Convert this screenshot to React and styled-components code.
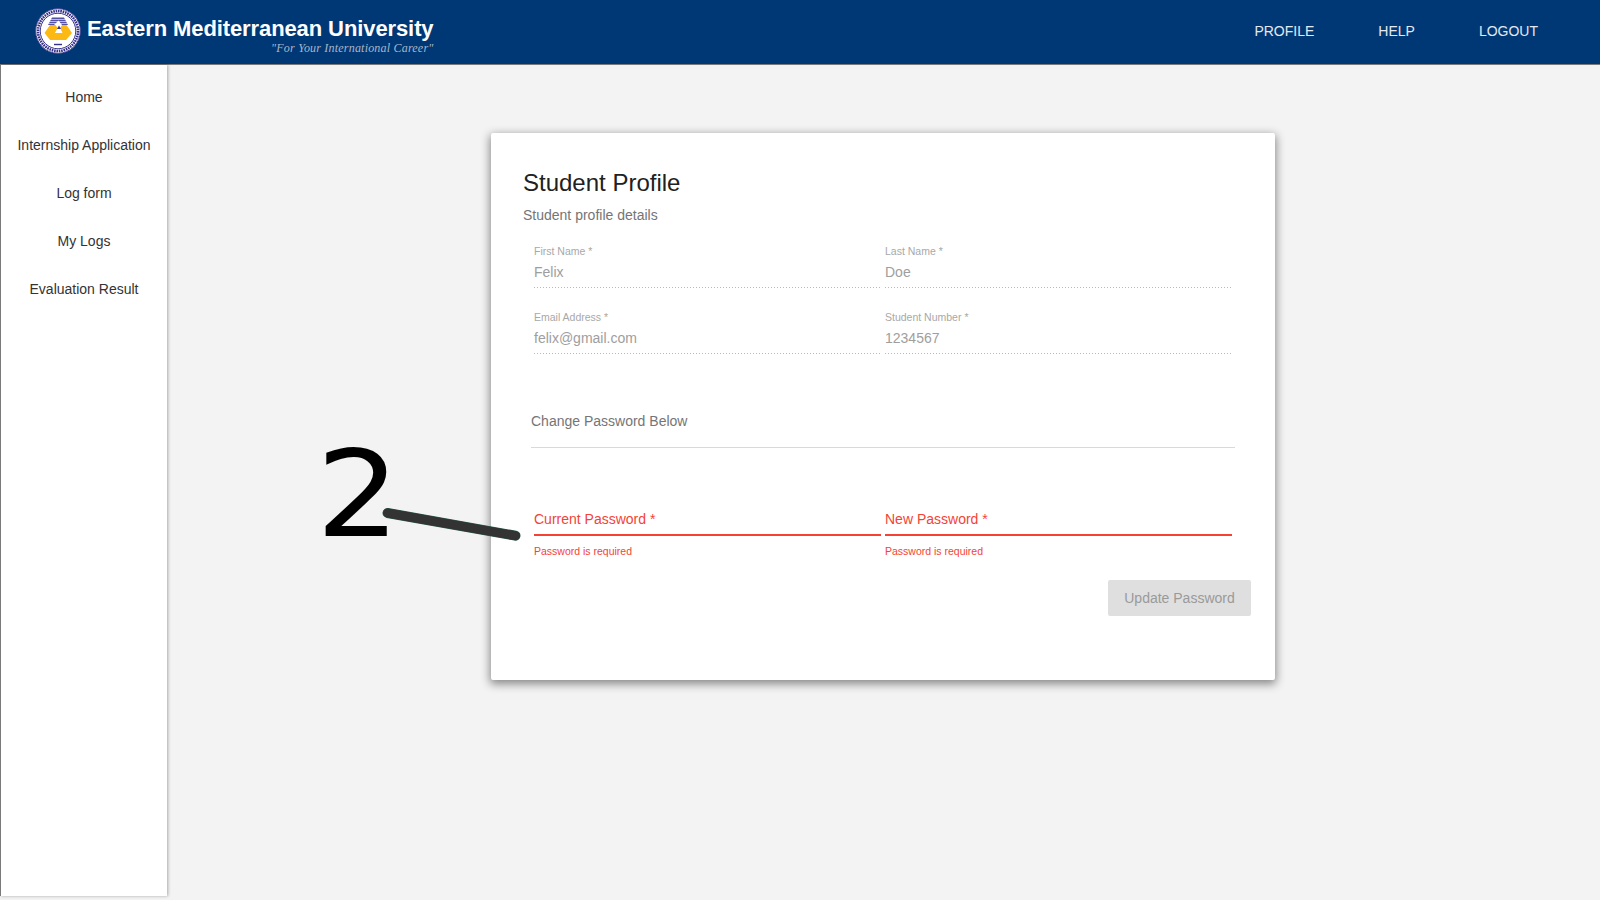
import React from 'react'
import styled, { createGlobalStyle } from 'styled-components'

const GlobalStyle = createGlobalStyle`
  html, body {
    margin: 0;
    padding: 0;
    height: 100%;
    background: #f3f3f3;
    font-family: "Liberation Sans", Arial, sans-serif;
    overflow: hidden;
  }
  * { box-sizing: border-box; }
`

const Page = styled.div`
  width: 1600px;
  height: 900px;
  position: relative;
  display: flex;
  flex-direction: column;
`

const Header = styled.header`
  height: 65px;
  flex: none;
  background: #003876;
  border-bottom: 1px solid #7a7a7a;
  display: flex;
  align-items: flex-start;
  justify-content: space-between;
  padding: 8px 62px 0 35px;
`

const Brand = styled.div`
  display: flex;
  gap: 6px;
`

const BrandText = styled.div`
  display: flex;
  flex-direction: column;
  align-items: flex-end;
  color: #fff;
`

const BrandName = styled.div`
  font-size: 22px;
  font-weight: 700;
  line-height: 26px;
  margin-top: 8px;
  white-space: nowrap;
  letter-spacing: -0.1px;
`

const Tagline = styled.div`
  font-family: "Liberation Serif", serif;
  font-style: italic;
  font-size: 12px;
  line-height: 14px;
  margin-top: -1px;
  color: #a9b6c8;
  letter-spacing: 0.2px;
  white-space: nowrap;
`

const TopNav = styled.nav`
  display: flex;
  gap: 64px;
  padding-top: 15px;
`

const TopLink = styled.a`
  color: #e4e9f0;
  font-size: 14px;
  line-height: 17px;
`

const Body = styled.div`
  display: flex;
  height: 831px;
  flex: none;
`

const Sidebar = styled.aside`
  width: 167px;
  flex: none;
  background: #fff;
  border-left: 1px solid #7a7a7a;
  box-shadow: 1px 0 3px rgba(0, 0, 0, 0.3);
  padding-top: 8px;
  display: flex;
  flex-direction: column;
`

const SideLink = styled.a`
  height: 48px;
  display: flex;
  align-items: center;
  justify-content: center;
  font-size: 14px;
  color: #333;
  white-space: nowrap;
`

const Main = styled.main`
  flex: 1;
  display: flex;
  justify-content: center;
  align-items: flex-start;
  padding: 68px 1px 0 0;
`

const Card = styled.section`
  width: 784px;
  height: 547px;
  background: #fff;
  border-radius: 2px;
  box-shadow: 0 3px 10px 1px rgba(0, 0, 0, 0.45);
  padding: 33px 24px 0 32px;
  display: flex;
  flex-direction: column;
`

const Title = styled.h1`
  margin: 0;
  font-size: 24px;
  font-weight: 400;
  line-height: 34px;
  color: #212121;
`

const Subtitle = styled.p`
  margin: 6px 0 0;
  font-size: 14px;
  line-height: 18px;
  color: #757575;
`

const FieldGrid = styled.div`
  display: grid;
  grid-template-columns: 347px 347px;
  column-gap: 4px;
  padding: ${p => p.$top}px 0 0 11px;
  row-gap: 22px;
`

const Field = styled.div`
  display: flex;
  flex-direction: column;
`

const SmallLabel = styled.label`
  font-size: 10.5px;
  line-height: 14px;
  color: #a8a8a8;
`

const Value = styled.div`
  font-size: 14px;
  line-height: 18px;
  height: 30px;
  padding-top: 5px;
  color: #9e9e9e;
  background-image: linear-gradient(to right, #b8b8b8 1px, transparent 1px);
  background-size: 3px 1px;
  background-repeat: repeat-x;
  background-position: left bottom;
`

const Section = styled.div`
  margin: 48px 16px 0 8px;
  height: 46px;
  padding-top: 10px;
  font-size: 14px;
  line-height: 18px;
  color: #757575;
  border-bottom: 1px solid #d9d9d9;
`

const ErrorInput = styled.div`
  height: 34px;
  padding-top: 8px;
  font-size: 14px;
  line-height: 18px;
  color: #f44336;
  border-bottom: 2px solid #f44336;
`

const Helper = styled.div`
  margin-top: 8px;
  font-size: 10.5px;
  line-height: 14px;
  color: #f44336;
`

const Actions = styled.div`
  display: flex;
  justify-content: flex-end;
  margin-top: 22px;
`

const Disabled = styled.button`
  width: 143px;
  height: 36px;
  border: 0;
  border-radius: 2px;
  background: #dfdfdf;
  color: #9a9a9a;
  font-family: inherit;
  font-size: 14px;
  padding: 0;
`

const Marker = styled.div`
  position: absolute;
  left: 316px;
  top: 426px;
  font-family: "DejaVu Sans", sans-serif;
  font-size: 120px;
  line-height: 137px;
  color: #000;
  transform: scaleX(1.1);
  transform-origin: left top;
`

const Stroke = styled.svg`
  position: absolute;
  left: 376px;
  top: 500px;
  width: 150px;
  height: 50px;
`

const Seal = () => (
  <svg width="46" height="46" viewBox="0 0 46 46" aria-hidden="true">
    <circle cx="23" cy="23" r="22.5" fill="#fff" />
    <circle cx="23" cy="23" r="22.3" fill="none" stroke="#35308a" strokeWidth="0.9" />
    <circle cx="23" cy="23" r="20" fill="none" stroke="#35308a" strokeWidth="2.6" strokeDasharray="1.6 0.8" />
    <circle cx="23" cy="23" r="17.8" fill="none" stroke="#35308a" strokeWidth="1" />
    <path d="M17 9.5 H29 L33 17 L27 17 L23.5 12.5 L19 17 H13 Z" fill="#5552a3" />
    <path d="M15.5 11.5 H30.5 M14.5 13.5 H31.5 M13.5 15.5 H32.5" stroke="#fff" strokeWidth="0.6" />
    <path d="M15 17 H20.5 L23 20.5 L20 25 H27 L25 20.5 L27 17 H31.5 L37 25 L31 32 H15 L9.5 25 Z" fill="#fdb913" />
    <path d="M24 17.5 L27.5 25 H20 Z" fill="#fff" />
    <path d="M24 17.5 L22 21 H26 Z" fill="#35308a" />
    <path d="M19 36.5 H27" stroke="#35308a" strokeWidth="1.4" />
  </svg>
)

const sideItems = ['Home', 'Internship Application', 'Log form', 'My Logs', 'Evaluation Result']

const App = () => {
  return (
    <Page>
      <GlobalStyle />
      <Header>
        <Brand>
          <Seal />
          <BrandText>
            <BrandName>Eastern Mediterranean University</BrandName>
            <Tagline>"For Your International Career"</Tagline>
          </BrandText>
        </Brand>
        <TopNav>
          <TopLink>PROFILE</TopLink>
          <TopLink>HELP</TopLink>
          <TopLink>LOGOUT</TopLink>
        </TopNav>
      </Header>
      <Body>
        <Sidebar>
          {sideItems.map(item => <SideLink key={item}>{item}</SideLink>)}
        </Sidebar>
        <Main>
          <Card>
            <Title>Student Profile</Title>
            <Subtitle>Student profile details</Subtitle>
            <FieldGrid $top={20}>
              <Field><SmallLabel>First Name *</SmallLabel><Value>Felix</Value></Field>
              <Field><SmallLabel>Last Name *</SmallLabel><Value>Doe</Value></Field>
              <Field><SmallLabel>Email Address *</SmallLabel><Value>felix@gmail.com</Value></Field>
              <Field><SmallLabel>Student Number *</SmallLabel><Value>1234567</Value></Field>
            </FieldGrid>
            <Section>Change Password Below</Section>
            <FieldGrid $top={54}>
              <Field><ErrorInput>Current Password *</ErrorInput><Helper>Password is required</Helper></Field>
              <Field><ErrorInput>New Password *</ErrorInput><Helper>Password is required</Helper></Field>
            </FieldGrid>
            <Actions><Disabled disabled>Update Password</Disabled></Actions>
          </Card>
        </Main>
      </Body>
      <Marker>2</Marker>
      <Stroke viewBox="0 0 150 50">
        <line x1="11.5" y1="13" x2="139.5" y2="35.7" stroke="#2b5a4a" strokeWidth="10" strokeLinecap="round" />
        <line x1="11.5" y1="13" x2="139.5" y2="35.7" stroke="#333" strokeWidth="9" strokeLinecap="round" />
      </Stroke>
    </Page>
  )
}

export default App
